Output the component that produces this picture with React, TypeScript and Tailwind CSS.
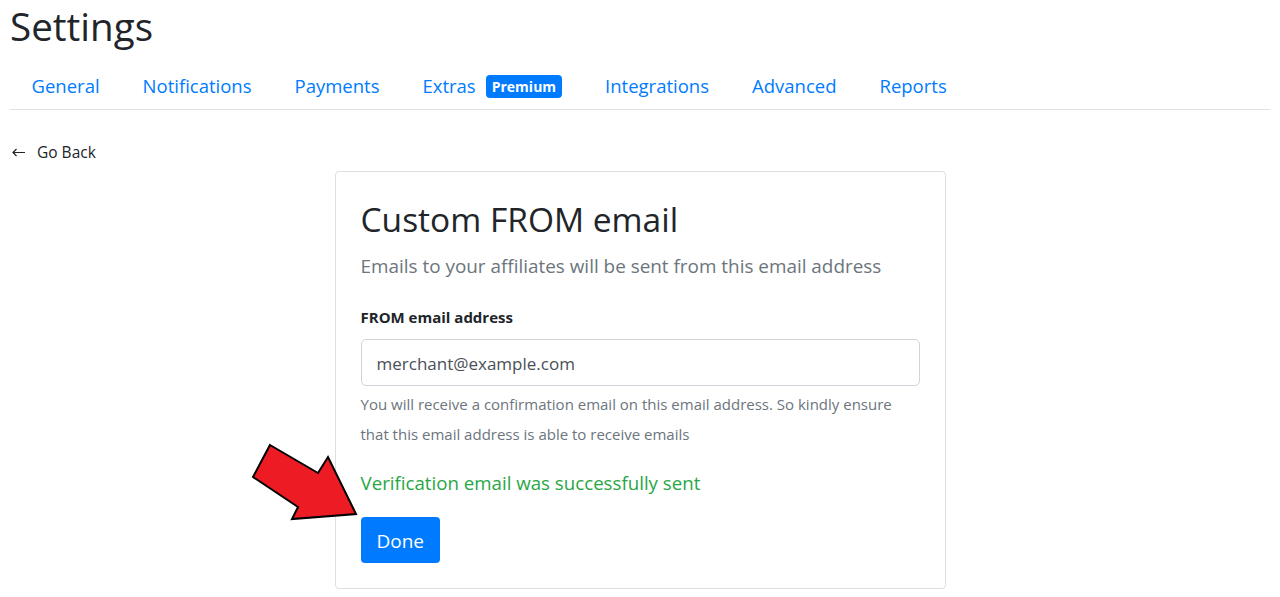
import { useState } from "react";

const tabs = ["General", "Notifications", "Payments", "Extras", "Integrations", "Advanced", "Reports"];

const App = () => {
  const [email, setEmail] = useState("merchant@example.com");

  return (
    <div className="relative min-h-[597px] bg-white px-[10px] font-['Open_Sans',sans-serif] text-[#212529]">
      <h1 className="pt-[2px] text-[38.6px] leading-[48px]">Settings</h1>

      <ul className="mt-[12px] flex border-b border-[#dee2e6]">
        {tabs.map((t) => (
          <li key={t}>
            <a href="#" className="flex items-center gap-[10px] px-[21.5px] pt-[9px] pb-[8px] text-[18.5px] leading-[30px] text-[#007bff]">
              {t}
              {t === "Extras" && (
                <span className="rounded-[4px] bg-[#007bff] px-[6px] text-[14px] font-bold leading-[23px] text-white">
                  Premium
                </span>
              )}
            </a>
          </li>
        ))}
      </ul>

      <a href="#" className="mt-[30px] flex items-center gap-[12px] pl-[2px] text-[15.5px] leading-6 text-[#212529]">
        <svg width="13" height="9" viewBox="0 0 13 9" fill="none" stroke="#212529" strokeWidth="1.2">
          <path d="M1 4.5h12M4.5 1 1 4.5 4.5 8" />
        </svg>
        Go Back
      </a>

      <div className="mx-auto mt-[7px] w-[611px] rounded-[4px] border border-[#dfdfdf] px-[25px] pt-[25px] pb-[25px]">
        <h2 className="text-[33.5px] leading-[44px] text-[#212529]">Custom FROM email</h2>
        <p className="mt-[10px] text-[18.9px] leading-[30px] text-[#6c757d]">
          Emails to your affiliates will be sent from this email address
        </p>

        <label className="mt-[24px] block text-[15px] font-bold leading-6 text-[#212529]">FROM email address</label>
        <input
          value={email}
          onChange={(e) => setEmail(e.target.value)}
          className="mt-[10px] block h-[47px] w-full rounded-[5px] border border-[#ced4da] px-[15px] pt-[2px] text-[17px] text-[#495057] outline-none"
        />
        <p className="mt-[3px] text-[15px] leading-[30px] text-[#6c757d]">
          You will receive a confirmation email on this email address. So kindly ensure that this email address is able to receive emails
        </p>

        <p className="mt-[19px] text-[18.7px] leading-[30px] text-[#28a745]">Verification email was successfully sent</p>

        <button className="mt-[19px] h-[46px] rounded-[4px] bg-[#007bff] px-[16px] pt-[2px] text-[19px] text-white">Done</button>
      </div>

      <svg className="absolute left-[248px] top-[440px]" width="112" height="84" viewBox="0 0 112 84">
        <polygon
          points="22,5 70,33 80,17 108,74 44,79 50,67 5,37"
          fill="#ed1c24"
          stroke="#000"
          strokeWidth="2"
          strokeLinejoin="miter"
        />
      </svg>
    </div>
  );
};

export default App;
